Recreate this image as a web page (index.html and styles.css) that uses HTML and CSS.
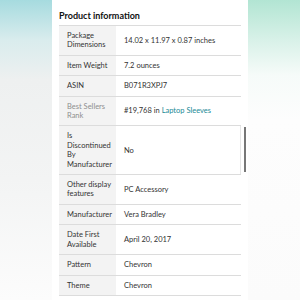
FILE: index.html
```html
<!DOCTYPE html>
<html>

<head>
    <title>Product information</title>
    <link rel="stylesheet" href="styles.css">
</head>

<body>
    <div class="side side-left"></div>
    <div class="panel">
        <h2>Product information</h2>
        <table class="details">
            <tr>
                <th>Package Dimensions</th>
                <td>14.02 x 11.97 x 0.87 inches</td>
            </tr>
            <tr>
                <th>Item Weight</th>
                <td>7.2 ounces</td>
            </tr>
            <tr>
                <th>ASIN</th>
                <td>B071R3XPJ7</td>
            </tr>
            <tr>
                <th class="faded">Best Sellers Rank</th>
                <td>#19,768 in <a href="#">Laptop Sleeves</a></td>
            </tr>
            <tr>
                <th>Is Discontinued By Manufacturer</th>
                <td class="boxed">No<span class="thumb"></span></td>
            </tr>
            <tr>
                <th>Other display features</th>
                <td>PC Accessory</td>
            </tr>
            <tr>
                <th>Manufacturer</th>
                <td>Vera Bradley</td>
            </tr>
            <tr>
                <th>Date First Available</th>
                <td>April 20, 2017</td>
            </tr>
            <tr>
                <th>Pattern</th>
                <td>Chevron</td>
            </tr>
            <tr>
                <th>Theme</th>
                <td>Chevron</td>
            </tr>
        </table>
    </div>
    <div class="side side-right"></div>
</body>

</html>
```

FILE: styles.css
```css
body {
    margin: 0;
    height: 300px;
    overflow: hidden;
    display: grid;
    grid-template-columns: 52px 196px 52px;
    font-family: Lato, "Noto Sans", sans-serif;
    color: #333;
    background: #fff;
}

.side-left {
    background: linear-gradient(to bottom, #a6dbdf 0px, #d9eced 40px, #eef0f0 80px, #f3f4f4 180px, #fcfcfc 300px);
}

.side-right {
    background: linear-gradient(to bottom, #b2e5d3 0px, #d8f1e8 40px, #f6fbf9 75px, #fdfdfd 120px, #fbfbfb 300px);
}

.panel {
    background: #fff;
    padding: 0 7px;
}

h2 {
    margin: 10px 0 4px;
    font-size: 9px;
    line-height: 11px;
    font-weight: bold;
    color: #0f1111;
}

.details {
    width: 100%;
    table-layout: fixed;
    border-collapse: collapse;
    border-top: 1px solid #dcdcdc;
    font-size: 7.5px;
    line-height: 9.4px;
}

.details th,
.details td {
    padding: 5px 8px;
    border-bottom: 1px solid #dcdcdc;
    text-align: left;
    vertical-align: middle;
}

.details th {
    width: 45px;
    padding-right: 4px;
    background: #f3f3f3;
    font-weight: normal;
    color: #333;
}

.details th.faded {
    color: #8f8f8f;
}

.details a {
    color: #1b8a96;
    text-decoration: none;
}

.details td.boxed {
    position: relative;
    border-right: 1px solid #e6e6e6;
}

/* scrollbar thumb hanging just off the table edge */
.thumb {
    position: absolute;
    right: -6px;
    top: 1px;
    width: 2px;
    height: 45px;
    background: #777;
}
```
